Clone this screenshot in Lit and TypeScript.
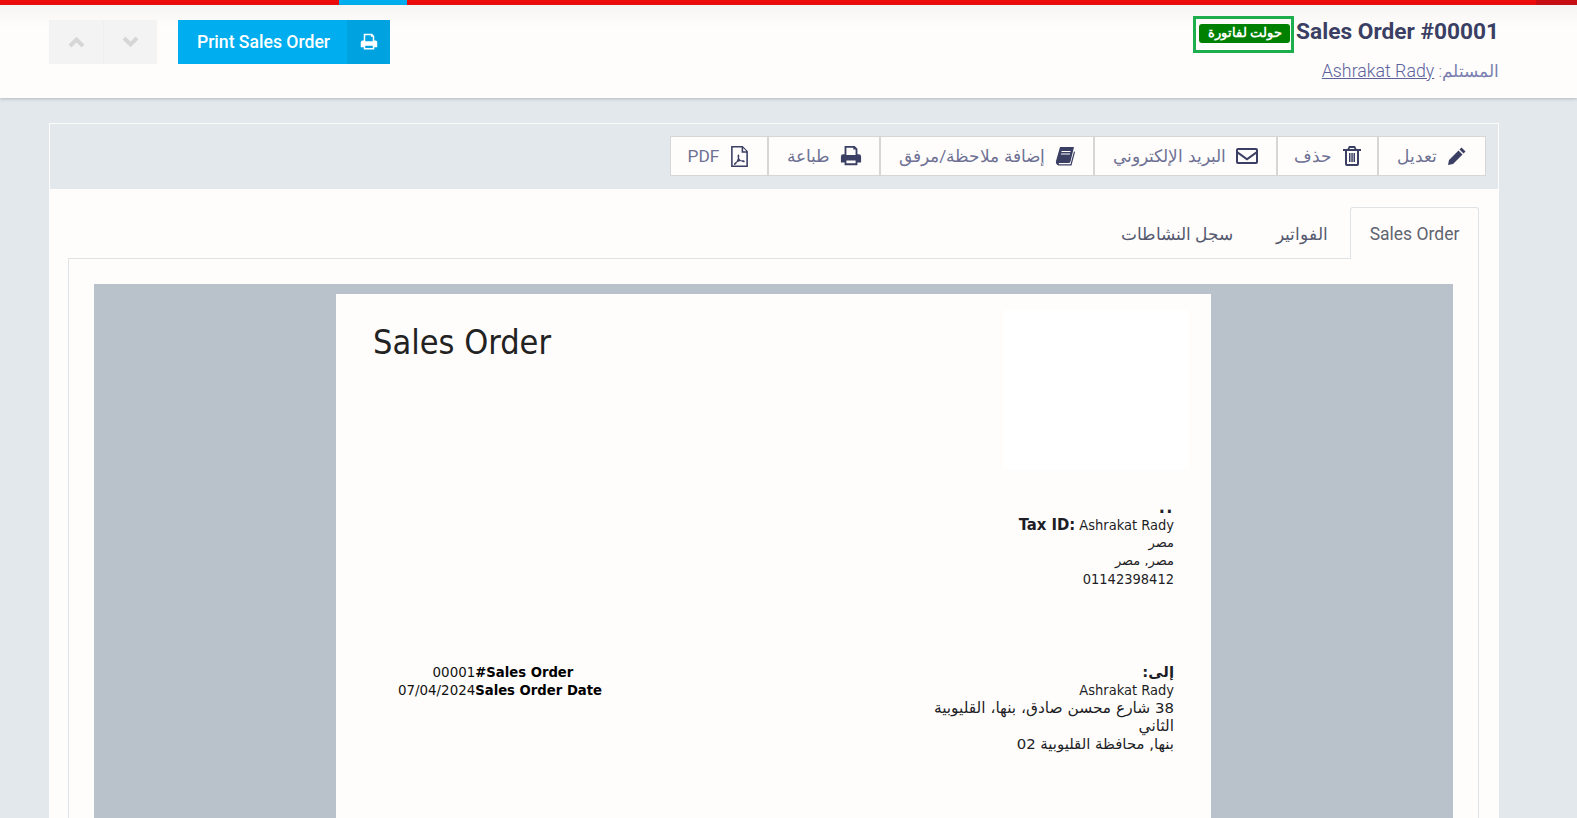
import { LitElement, html, css, svg } from "lit";
import { customElement } from "lit/decorators.js";

const ic = (vb: string, body: unknown, cls = "ic") =>
  html`<svg class=${cls} viewBox=${vb} aria-hidden="true">${body}</svg>`;

const printIcon = svg`<path fill-rule="evenodd" d="M5 1h11l3 3v6h1.500A2.500 2.500 0 0 1 23 12.500V19h-4v3H5v-3H1v-6.500A2.500 2.500 0 0 1 3.500 10H5zM7 3v8h10V5h-2.500V3zM7 17v3h10v-3z"/>`;

@customElement("app-root")
export class AppRoot extends LitElement {
  static styles = css`
    :host { display: block; height: 818px; overflow: hidden; background: #e3e8ed; font-family: Roboto, "Noto Sans", sans-serif; direction: rtl; }
    .topbar { height: 5px; background: linear-gradient(to right, #ec0c0c 97.4%, #c80e12 97.4%); display: flex; direction: ltr; padding-left: 339px; overflow: hidden; }
    .topbar span { width: 68px; height: 5px; background: #00aeef; display: block; }
    header { height: 93px; background: linear-gradient(#f5f5f4, #fffdfb 22px); box-shadow: 0 1px 3px rgba(90,100,110,.35); display: flex; justify-content: space-between; padding: 0 78px 0 49px; position: relative; }
    .head-info { display: flex; flex-direction: column; align-items: flex-start; padding-top: 11px; }
    .title-row { display: flex; align-items: center; gap: 2px; height: 37px; }
    h1 { margin: 0; font-size: 22.700px; font-weight: 700; color: #3a3f63; direction: ltr; line-height: 30px; margin-top: -5px; }
    .mark { border: 3px solid #1fae4e; width: 101px; height: 37px; box-sizing: border-box; display: flex; align-items: center; justify-content: flex-start; padding-right: 1px; }
    .badge { background: #008000; color: #fff; font-size: 12.500px; font-weight: 700; border-radius: 3px; width: 91px; height: 19px; line-height: 18px; text-align: center; margin-top: -2px; }
    .recv { font-size: 17px; font-weight: 300; color: #7a7fb0; margin-top: 6px; line-height: 24px; }
    .recv a { color: #5d629d; text-decoration: underline; font-size: 17.800px; }
    .actions { display: flex; direction: ltr; gap: 21px; padding-top: 15px; }
    .nav { display: flex; height: 44px; }
    .nav span { width: 54px; background: #f3f3f3; display: flex; align-items: center; justify-content: center; box-sizing: border-box; }
    .nav span + span { border-left: 1px solid #efefef; }
    .nav svg { width: 17px; height: 12px; fill: none; stroke: #d6d6d6; stroke-width: 4; }
    .print { display: flex; height: 44px; background: #00aeef; color: #fff; font-size: 17.600px; font-weight: 500; line-height: 44px; }
    .print b { font-weight: 500; width: 169px; box-sizing: border-box; padding-left: 2px; text-align: center; }
    .print i { width: 43px; background: #00a2e0; display: flex; align-items: center; justify-content: center; }
    .print svg { width: 18px; height: 18px; fill: #fff; }
    main { margin: 25px 78px 0 49px; border: 1px solid #fffdfb; border-top-color: #fbfbfa; background: #fffdfb; height: 800px; }
    .toolbar { height: 65px; background: #e3e8ed; display: flex; padding: 12px 12px 0 0; box-sizing: border-box; }
    .btn { height: 40px; box-sizing: border-box; border: 1px solid #d6d6d6; background: #fffdfb; display: flex; align-items: center; justify-content: center; gap: 10px; color: #6e7194; font-size: 17.300px; }
    .btn svg { width: 20px; height: 20px; fill: #3a3f63; flex: none; }
    .btn svg.mail { width: 22px; height: 20px; }
    .btn svg.wide { width: 22px; height: 22px; }
    .btn svg.pdf { width: 21px; height: 21px; }
    .tabs { display: flex; padding: 18px 19px 0 0; height: 52px; box-sizing: content-box; }
    .tab { height: 52px; box-sizing: border-box; font-size: 16.500px; color: #555a70; line-height: 56px; padding: 0 22px 0 21px; font-weight: 300; }
    .tab.on { border: 1px solid #e0e3e6; border-bottom: 0; border-radius: 3px 3px 0 0; background: #fffdfb; position: relative; z-index: 1; font-weight: 400; font-size: 17.500px; width: 129px; padding: 0; text-align: center; height: 52px; color: #5f6470; line-height: 52px; }
    .panel { margin: -1px 19px 0 18px; border: 1px solid #e0e3e6; padding: 25px 25px 0; height: 700px; }
    .viewer { background: #b9c1ca; height: 700px; padding-top: 10px; display: flex; justify-content: center; }
    .paper { width: 875px; height: 700px; background: #fffdfb; font-family: "DejaVu Sans", sans-serif; font-size: 13px; line-height: 18px; color: #1d1d26; box-sizing: border-box; padding: 16px 22px 0 37px; }
    .top { display: flex; direction: ltr; justify-content: space-between; height: 160px; }
    .top h2 { margin: 12px 0 0; font-size: 34px; font-weight: 400; line-height: 40px; color: #222; font-family: "DejaVu Sans Condensed", "DejaVu Sans", sans-serif; }
    .logo { width: 186px; height: 160px; background: #fff; }
    .addr { padding-right: 15px; font-family: "DejaVu Sans Condensed", "DejaVu Sans", sans-serif; font-size: 14.500px; }
    .ar { font-family: "DejaVu Sans", sans-serif; font-size: 14.900px; }
    .ar.sm { font-size: 13px; }
    .ar.lg { font-size: 15.400px; }
    .num { font-size: 14.900px; }
    .dots { font-size: 18px; letter-spacing: 1.500px; }
    .from { margin-top: 28px; height: 90px; }
    .bottom { display: flex; justify-content: space-between; margin-top: 75px; }
    .meta { direction: ltr; display: grid; grid-template-columns: auto auto; justify-content: start; align-self: flex-start; margin-left: 25px; width: 400px; font-family: "DejaVu Sans Condensed", "DejaVu Sans", sans-serif; font-size: 14.900px; color: #111; }
    .meta span { text-align: right; }
    .meta b { color: #000; font-size: 14.700px; }
    .nowrap { white-space: nowrap; }
    .tax { direction: ltr; text-align: right; }
    .tax b { font-size: 16.500px; }
  `;

  render() {
    const btn = (label: string, width: number, icon: unknown) =>
      html`<div class="btn" style="width:${width}px">${icon}<span>${label}</span></div>`;
    return html`
      <div class="topbar"><span></span></div>
      <header>
        <div class="head-info">
          <div class="title-row">
            <h1>Sales Order #00001</h1>
            <div class="mark"><div class="badge">حولت لفاتورة</div></div>
          </div>
          <div class="recv">المستلم: <a>Ashrakat Rady</a></div>
        </div>
        <div class="actions">
          <div class="nav">
            <span><svg viewBox="0 0 17 12"><path d="M2 10 8.500 3.500 15 10"/></svg></span>
            <span><svg viewBox="0 0 17 12"><path d="M2 2 8.500 8.500 15 2"/></svg></span>
          </div>
          <div class="print"><b>Print Sales Order</b><i>${ic("0 0 24 24", printIcon, "pi")}</i></div>
        </div>
      </header>
      <main>
        <div class="toolbar">
          ${btn("تعديل", 108, ic("0 0 20 20", svg`<path d="M14.500 1.500 18.500 5.500 16.500 7.500 12.500 3.500zM11.500 4.500 15.500 8.500 6 18 1 19 2 14z"/>`))}
          ${btn("حذف", 101, ic("0 0 20 20", svg`<path fill-rule="evenodd" d="M7 0h6l1.500 3H19v2h-2v13a2 2 0 0 1-2 2H5a2 2 0 0 1-2-2V5H1V3h4.500zM8 2l-.600 1h5.200L12 2zM5 5v13h10V5zM7 7h1.500v9H7zM9.300 7h1.500v9H9.300zM11.500 7H13v9h-1.500z"/>`))}
          ${btn("البريد الإلكتروني", 183, ic("0 0 22 20", svg`<path fill-rule="evenodd" d="M2 2h18a2 2 0 0 1 2 2v12a2 2 0 0 1-2 2H2a2 2 0 0 1-2-2V4a2 2 0 0 1 2-2zM2 4v1.500l9 6.500 9-6.500V4zM2 8v8h18V8l-9 6.500z"/>`, "mail"))}
          ${btn("إضافة ملاحظة/مرفق", 214, ic("0 0 20 20", svg`<path fill-rule="evenodd" d="M5 1h14l-3.500 14.500a2 2 0 0 1-2 1.500H4a1 1 0 0 0 0 1.200h11.500l3.500-13 1 .8-3.500 13.500H3.500C1.500 19 .500 17 1 15zM6.500 5v1h9V5zM6 7.500v1h9v-1z"/>`))}
          ${btn("طباعة", 112, ic("0 0 24 24", printIcon, "wide"))}
          ${btn("PDF", 98, ic("0 0 20 20", svg`<path fill-rule="evenodd" d="M2 0h11l5 5v15H2zM3.500 1.500v17h13V6.500H12v-5zM13.500 2v3h3zM9 8c1 0 1 2 .500 3.500.6 1 1.300 1.800 2 2.200 1.500-.2 3.500-.1 3.500 1s-2.300.8-3.800-.3c-1 .2-2.500.6-3.500 1-1 2-2 3.100-2.800 2.500-.8-.8.800-2.500 2.300-3.200.5-1 1-2.200 1.300-3.200C8 10 8 8 9 8z"/>`, "pdf"))}
        </div>
        <div class="tabs">
          <div class="tab on">Sales Order</div>
          <div class="tab">الفواتير</div>
          <div class="tab">سجل النشاطات</div>
        </div>
        <div class="panel">
          <div class="viewer">
            <div class="paper">
              <div class="top"><h2>Sales Order</h2><div class="logo"></div></div>
              <div class="addr from">
                <div class="dots"><b>..</b></div>
                <div class="tax nowrap"><b>Tax ID:</b> Ashrakat Rady</div>
                <div class="ar sm">مصر</div>
                <div class="ar sm">مصر, مصر</div>
                <div>01142398412</div>
              </div>
              <div class="bottom">
                <div class="addr">
                  <div class="ar"><b>إلى:</b></div>
                  <div>Ashrakat Rady</div>
                  <div class="ar lg"><span class="num">38</span> شارع محسن صادق، بنها، القليوبية</div>
                  <div class="ar lg">الثاني</div>
                  <div class="ar">بنها, محافظة القليوبية 02</div>
                </div>
                <div class="meta">
                  <span>00001</span><b>#Sales Order</b>
                  <span>07/04/2024</span><b>Sales Order Date</b>
                </div>
              </div>
            </div>
          </div>
        </div>
      </main>
    `;
  }
}
